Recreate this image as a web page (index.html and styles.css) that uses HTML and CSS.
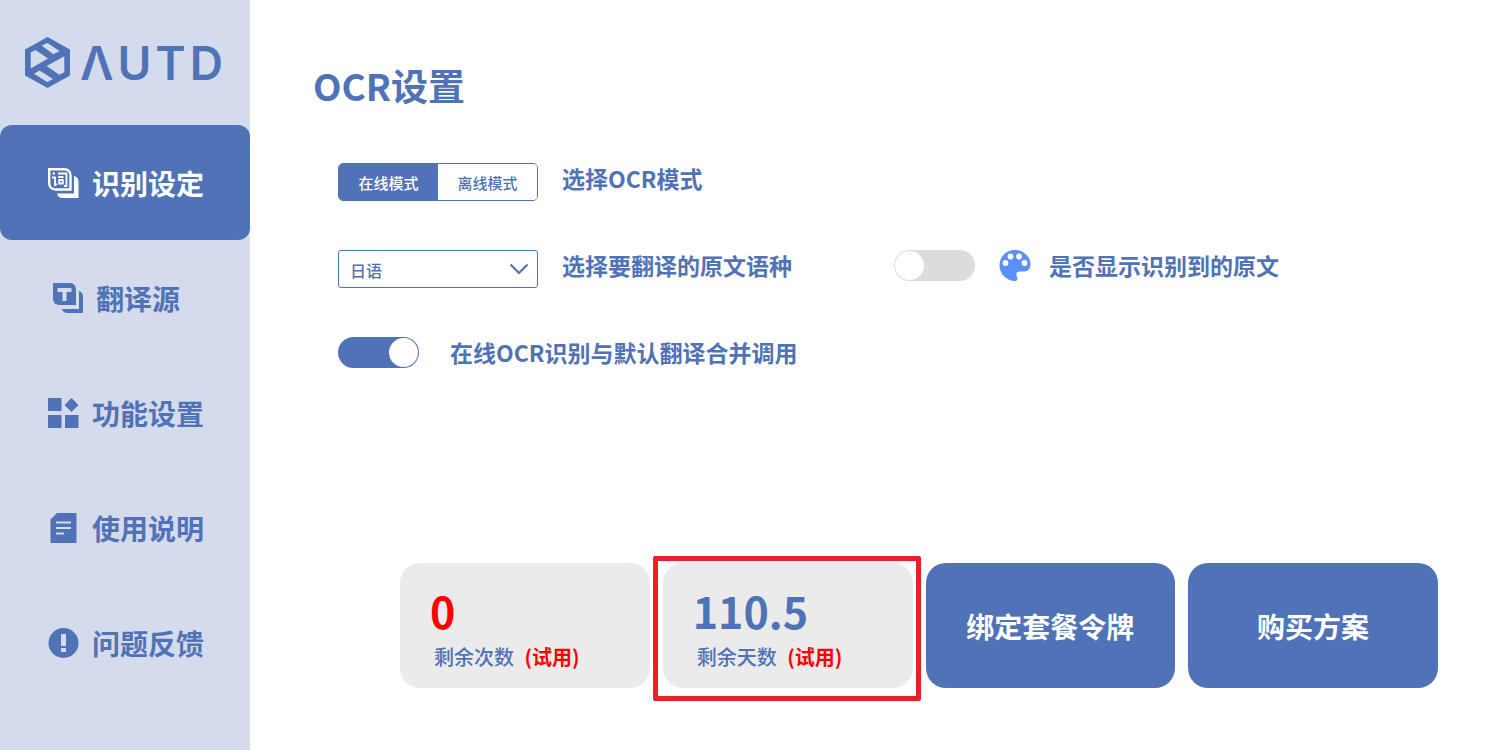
FILE: index.html
```html
<!DOCTYPE html>
<html lang="zh-CN">
<head>
<meta charset="utf-8">
<title>OCR设置</title>
<link rel="stylesheet" href="styles.css">
</head>
<body>
<div class="app">
  <aside class="sidebar">
    <div class="brand" role="img" aria-label="AUTD">
      <svg class="brand-mark" viewBox="0 0 47 52" width="47" height="52" aria-hidden="true">
        <path fill="#5072b6" fill-rule="evenodd" d="M23.500 0 46 12.500V38.500L23.500 51 1 38.500V12.500ZM17.500 8.500 29.500 17.300 35.500 14 23.500 6ZM6.700 15.500V31.500L24 21.500 11.500 13ZM40.300 19.300 22.700 29 35.300 37.700 40.300 35.300ZM10 36.800 23.300 45 29 42 15.500 33.500Z"/>
      </svg>
      <span class="wordmark"><span>Λ</span><span>U</span><span>T</span><span>D</span></span>
    </div>
    <nav class="nav">
      <a class="nav-item active" href="#ocr" aria-current="page">
        <svg width="31" height="30" viewBox="0 0 31 30" aria-hidden="true">
          <path d="M1.200 1.200H16.500a6 6 0 0 1 6 6V21.500H7.200a6 6 0 0 1-6-6Z" fill="none" stroke="#fff" stroke-width="2.400"/>
          <path d="M4.500 5.500h2.500M4 9.500H7V17l2-1M10 5.500h8.500V18H16M10 9h5.500M11.200 12h3.600v3.500h-3.600Z" fill="none" stroke="#fff" stroke-width="1.800"/>
          <path d="M26 8q4.500 1 4.500 6V30H15q-5 0-6-4.500H26Z" fill="#fff"/>
        </svg>
        <span>识别设定</span>
      </a>
      <a class="nav-item" href="#source">
        <svg width="35" height="30" viewBox="-5 0 35 30" aria-hidden="true">
          <path d="M0 0H17a6 6 0 0 1 6 6V22H6a6 6 0 0 1-6-6Z" fill="#5072b6"/>
          <path d="M4.500 5h14v4h-5v9H9.500V9h-5Z" fill="#d4dbed"/>
          <path d="M26 8q4 1 4 6V30H15q-5 0-6-4H26Z" fill="#5072b6"/>
        </svg>
        <span>翻译源</span>
      </a>
      <a class="nav-item" href="#features">
        <svg width="31" height="30" viewBox="0 0 31 30" aria-hidden="true">
          <path d="M0 0H13.500V13H0ZM0 17H13.500V30H0ZM17 17H30.500V30H17ZM23.500 0 30.500 7 23.500 14 16.500 7Z" fill="#5072b6"/>
        </svg>
        <span>功能设置</span>
      </a>
      <a class="nav-item" href="#manual">
        <svg width="31" height="30" viewBox="0 0 31 30" aria-hidden="true">
          <path d="M9 0H28.500V30H2.500V6.500Z" fill="#5072b6"/>
          <path d="M8 9.500H23M8 15H23M8 20.500H16" stroke="#d4dbed" stroke-width="2"/>
        </svg>
        <span>使用说明</span>
      </a>
      <a class="nav-item" href="#feedback">
        <svg width="31" height="30" viewBox="0 0 31 30" aria-hidden="true">
          <circle cx="15.500" cy="15" r="15" fill="#5072b6"/>
          <path d="M13 6h5v12h-5ZM13 20h5v4h-5Z" fill="#d4dbed"/>
        </svg>
        <span>问题反馈</span>
      </a>
    </nav>
  </aside>

  <main class="main">
    <h1 class="title">OCR设置</h1>
    <form class="settings">
      <div class="row">
        <div class="segmented" role="group" aria-label="选择OCR模式">
          <button class="segment selected" type="button" aria-pressed="true">在线模式</button>
          <button class="segment" type="button" aria-pressed="false">离线模式</button>
        </div>
        <span class="label">选择OCR模式</span>
      </div>
      <div class="row split">
        <div class="cell">
          <span class="select-box">
            <select id="language" class="select"><option>日语</option></select>
            <svg class="chevron" width="20" height="12" viewBox="0 0 20 12" aria-hidden="true"><path d="m1.500 1.500 8.500 8.500 8.500-8.500" fill="none" stroke="#5072b6" stroke-width="2.200"/></svg>
          </span>
          <label class="label" for="language">选择要翻译的原文语种</label>
        </div>
        <div class="cell">
          <input id="show-source" class="switch" type="checkbox">
          <svg class="palette" width="32" height="32" viewBox="0 0 32 32" aria-hidden="true">
            <path d="M15.500 0C7 0 .500 7 .500 15.500S8 31 16 31c2.500 0 3-2 1.800-4.500-1.300-3 .2-5 3.200-5h4c4.500 0 6.500-3 6.500-7C31.500 6 24 0 15.500 0Z" fill="#5b8ff9"/>
            <g fill="#fff"><circle cx="6.500" cy="13" r="2.900"/><circle cx="11.500" cy="6.500" r="2.900"/><circle cx="20" cy="6.500" r="2.900"/><circle cx="25.500" cy="13" r="2.900"/></g>
          </svg>
          <label class="label" for="show-source">是否显示识别到的原文</label>
        </div>
      </div>
      <div class="row wide">
        <input id="merge" class="switch" type="checkbox" checked>
        <label class="label" for="merge">在线OCR识别与默认翻译合并调用</label>
      </div>
    </form>

    <section class="cards">
      <div class="card">
        <strong class="count empty">0</strong>
        <p class="caption">剩余次数 <em>(试用)</em></p>
      </div>
      <div class="card highlighted">
        <strong class="count">110.5</strong>
        <p class="caption">剩余天数 <em>(试用)</em></p>
      </div>
      <button class="card action" type="button">绑定套餐令牌</button>
      <button class="card action" type="button">购买方案</button>
    </section>
  </main>
</div>
</body>
</html>
```
FILE: styles.css
```css
* { box-sizing: border-box; }

body {
  margin: 0;
  color: #5072b6;
  background: #fff;
  font-family: "Noto Sans CJK SC", sans-serif;
  font-weight: 500;
}

button, select { font: inherit; color: inherit; }

.app { display: flex; min-height: 100vh; }

.sidebar { flex: 0 0 250px; background: #d4dbed; }

.brand {
  display: flex;
  align-items: center;
  gap: 9px;
  height: 125px;
  padding-left: 24px;
}

.wordmark {
  display: flex;
  gap: 4px;
  font: 600 46px/52px Inter, sans-serif;
}

.nav-item {
  display: flex;
  align-items: center;
  gap: 13px;
  height: 115px;
  padding-left: 48px;
  border-radius: 12px;
  color: #5072b6;
  font-size: 28px;
  font-weight: 700;
  text-decoration: none;
}

.nav-item.active { background: #5072b6; color: #fff; }

.main {
  flex: 1;
  display: flex;
  flex-direction: column;
  padding: 58px 0 62px;
}

.title {
  margin: 0;
  padding-left: 63px;
  font-size: 37px;
  font-weight: 700;
  line-height: 54px;
}

.settings {
  display: flex;
  flex-direction: column;
  gap: 49px;
  padding: 51px 50px 0 88px;
}

.row, .cell { display: flex; align-items: flex-start; gap: 24px; min-height: 38px; }
.row.split { display: grid; grid-template-columns: 1fr 1fr; gap: 0; }
.row.wide { gap: 31px; }

.label { font-size: 23px; font-weight: 700; line-height: 31px; white-space: nowrap; }

.segmented {
  display: flex;
  width: 200px;
  height: 38px;
  border: 1px solid #5072b6;
  border-radius: 5px;
  overflow: hidden;
}

.segment { flex: 1; padding: 0; border: 0; background: #fff; font-size: 15px; }
.segment.selected { background: #5072b6; color: #fff; }

.select-box { position: relative; width: 200px; }

.select {
  appearance: none;
  display: block;
  width: 100%;
  height: 38px;
  padding: 2px 11px 0;
  border: 1px solid #5072b6;
  border-radius: 3px;
  background: #fff;
  font-size: 16px;
}

.chevron { position: absolute; top: 13px; right: 9px; pointer-events: none; }

.switch {
  appearance: none;
  flex: none;
  display: flex;
  width: 81px;
  height: 31px;
  margin: 0;
  padding: 1px;
  border-radius: 16px;
  background: #dcdcdc;
}

.switch::before { content: ""; width: 29px; height: 29px; border-radius: 50%; background: #fff; }
.switch:checked { justify-content: flex-end; background: #5072b6; }

.palette { flex: none; }
.palette + .label { margin-left: -6px; }

.cards {
  display: grid;
  grid-template-columns: repeat(4, 1fr);
  gap: 13px;
  margin-top: auto;
  padding: 0 62px 0 150px;
}

.card {
  position: relative;
  height: 125px;
  padding: 20px 30px 0;
  border: 0;
  border-radius: 20px;
  background: #ebebeb;
}

.card.action { padding: 0; background: #5072b6; color: #fff; font-size: 28px; font-weight: 700; }

.highlighted::after {
  content: "";
  position: absolute;
  inset: -7px -8px -13px -10px;
  border: 5px solid #ea1f28;
  border-radius: 2px;
}

.count { display: block; font-size: 43px; font-weight: 700; line-height: 54px; }
.count.empty { color: #f00; }

.caption { margin: 0; padding-left: 4px; font-size: 20px; line-height: 40px; white-space: nowrap; }
.caption em { margin-left: 6px; color: #f00; font-style: normal; font-weight: 700; }
```
